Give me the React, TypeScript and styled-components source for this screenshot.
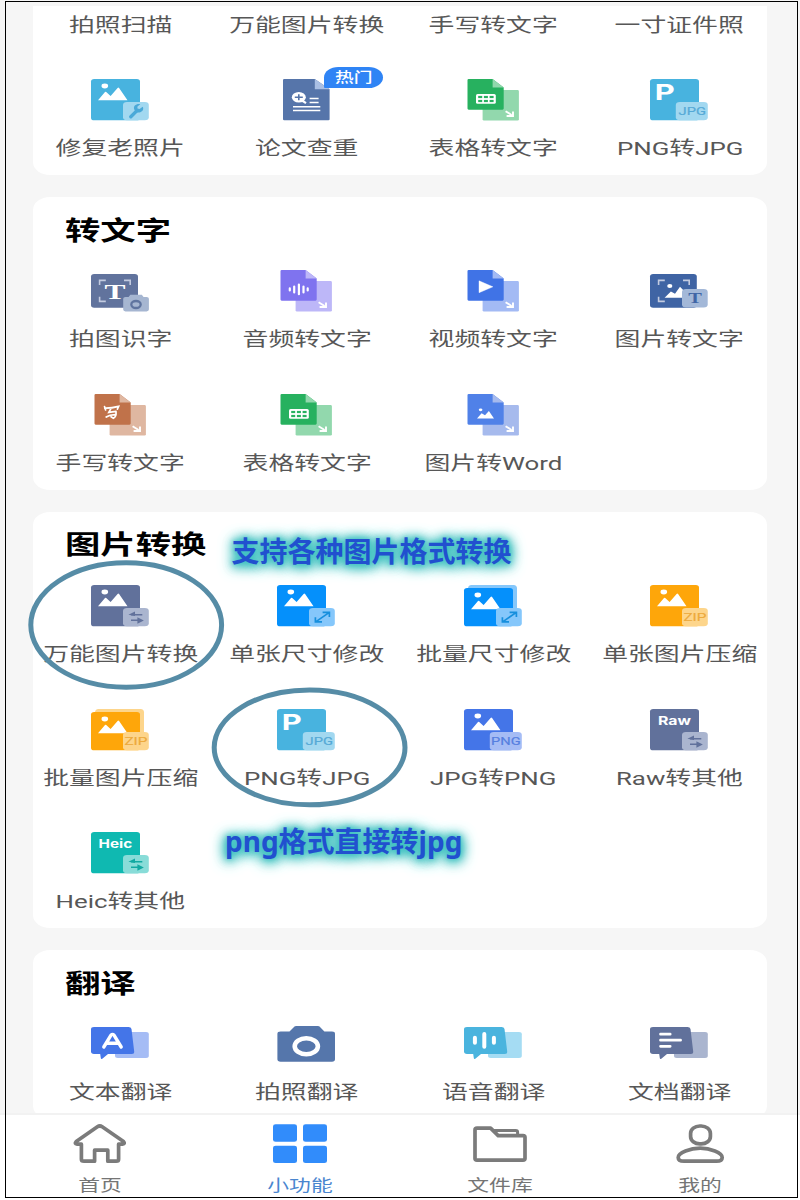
import React from "react";
import styled, { createGlobalStyle } from "styled-components";

const STRETCH = 1.36;
const CJK = `"Noto Sans CJK SC", sans-serif`;

const GlobalStyle = createGlobalStyle`
  * { box-sizing: border-box; }
  html, body { margin: 0; padding: 0; background: #f6f6f6; }
`;

const Screen = styled.div`
  position: relative;
  width: 800px;
  height: 1200px;
  overflow: hidden;
  display: flex;
  flex-direction: column;
  background: #f6f6f6;
  font-family: Roboto, ${CJK};
`;

const Feed = styled.main`
  flex: 1;
  min-height: 0;
  overflow: hidden;
  margin-top: 5.6px;
  padding: 0 33.3px;
  display: flex;
  flex-direction: column;
  gap: 22px;
`;

const Card = styled.section<{ $continued?: boolean }>`
  flex: none;
  background: #fff;
  border-radius: ${(p) => (p.$continued ? "0 0 17px 17px / 0 0 13px 13px" : "17px / 13px")};
  padding: ${(p) => (p.$continued ? "7px" : "0")} 0 13px;
`;

const Title = styled.h2`
  margin: 0 0 6px;
  height: 67px;
  padding-left: 31.7px;
  display: flex;
  align-items: center;
  font-size: 26px;
  line-height: 36px;
  font-weight: 700;
  color: #000;
`;

const TitleText = styled.span`
  display: inline-block;
  transform: scaleX(${STRETCH});
  transform-origin: left center;
`;

const Grid = styled.div`
  display: grid;
  grid-template-columns: repeat(4, 186.4px);
  row-gap: 40.7px;
  margin: 0 -6.4px;
`;

const Cell = styled.div`
  display: flex;
  flex-direction: column;
  align-items: center;
`;

const IconSlot = styled.div`
  position: relative;
  width: 60px;
  height: 44px;
  margin-bottom: 13px;
`;

const Drawing = styled.svg`
  display: block;
  width: 60px;
  height: 44px;
  overflow: visible;
`;

const Label = styled.span`
  height: 26px;
  line-height: 26px;
  padding-left: 0.6px;
  font-size: 19px;
  color: #575757;
  white-space: nowrap;
  transform: scaleX(${STRETCH});
`;

const HotBadge = styled.span`
  position: absolute;
  left: 47.6px;
  top: -12.6px;
  width: 59px;
  height: 21.4px;
  display: flex;
  align-items: center;
  justify-content: center;
  background: #2f84f5;
  border-radius: 15px 15px 15px 1px / 11px 11px 11px 1px;
`;

const HotText = styled.span`
  font-size: 13.8px;
  line-height: 20px;
  font-weight: 500;
  color: #fff;
  white-space: nowrap;
  transform: scaleX(${STRETCH});
`;

const TabBar = styled.nav`
  flex: none;
  height: 87px;
  border-top: 2px solid #f2f2f2;
  background: #fff;
  display: grid;
  grid-template-columns: repeat(4, 1fr);
`;

const Tab = styled.div<{ $active?: boolean }>`
  display: flex;
  flex-direction: column;
  align-items: center;
  padding-top: 7px;
  color: ${(p) => (p.$active ? "#4a86cf" : "#757575")};
`;

const TabLabel = styled.span`
  margin-top: 8px;
  font-size: 16px;
  line-height: 24px;
  white-space: nowrap;
  transform: scaleX(${STRETCH});
`;

const Frame = styled.div`
  position: absolute;
  left: 5px;
  top: 1px;
  width: 793px;
  height: 1197px;
  border: 1px solid #000;
  pointer-events: none;
`;

const Marks = styled.svg`
  position: absolute;
  inset: 0;
  width: 800px;
  height: 1200px;
  pointer-events: none;
`;

const Note = styled.div<{ $x: number; $y: number }>`
  position: absolute;
  left: ${(p) => p.$x}px;
  top: ${(p) => p.$y}px;
  font-family: "Noto Sans", ${CJK};
  font-size: 28px;
  line-height: 40px;
  font-weight: 700;
  color: #2150cf;
  white-space: nowrap;
  text-shadow: 0 0 5px #45c4c4, 0 1px 10px #35bcbc, 0 1px 13px #35bcbc, 0 1px 15px #4cc8c5, 0 2px 16px #5fcfcb;
`;

/* ---------- icon pieces ---------- */

type Tone = { c: string; l: string };

const Mountains = () => (
  <g fill="#fff">
    <ellipse cx="14.8" cy="7" rx="3.3" ry="2.4" />
    <path d="M8 21.2 15 13.1q.6-.7 1.2 0L20.6 17 27.6 9q.8-.8 1.5 0L37.5 21.2Z" />
  </g>
);

const Arrows = ({ c }: { c: string }) => (
  <g stroke={c} strokeWidth="1.5" fill={c}>
    <path d="M41 29.8H52.3M41 35.3H51" fill="none" />
    <path d="M38.4 29.8 45 26.6V31ZM53.9 35.5 47.4 32.2V38.7Z" stroke="none" />
  </g>
);

const Resize = ({ c }: { c: string }) => (
  <path d="M40 36.6 53 27.6M46.6 27.3H53.4V32M39.4 32.3V36.9H46" fill="none" stroke={c} strokeWidth="1.7" />
);

const Wrench = ({ c }: { c: string }) => (
  <g>
    <path d="M40.8 37.8 47 31.6" stroke={c} strokeWidth="3.4" strokeLinecap="round" />
    <path d="M52.7 27.7 49.6 30 47.4 29.4 47.5 27.4 50.3 25.2C46 24.5 43 27.2 44.2 30.2 45 33.2 48 34.3 50.3 33.2 52.8 32.2 54 29.9 52.7 27.7Z" fill={c} />
  </g>
);

const Tag = ({ text, c, x, w }: { text: string; c: string; x: number; w: number }) => (
  <text x={x} y="36.4" fontSize="11.4" fontFamily="Roboto, sans-serif" fontWeight="400" fill={c} stroke={c} strokeWidth=".2" textLength={w} lengthAdjust="spacingAndGlyphs">
    {text}
  </text>
);

const Head = ({ text, x, y, w, size }: { text: string; x: number; y: number; w: number; size: number }) => (
  <text x={x} y={y} fontSize={size} fontFamily="Inter, sans-serif" fontWeight="700" fill="#fff" textLength={w} lengthAdjust="spacingAndGlyphs">
    {text}
  </text>
);

type TileProps = {
  tone: Tone;
  wide?: boolean;
  stacked?: boolean;
  children?: React.ReactNode;
  badge: React.ReactNode;
};

const Tile = ({ tone, wide, stacked, children, badge }: TileProps) => (
  <Drawing viewBox="0 0 60 44">
    {stacked && <rect x="5" y="0" width="49" height="36" rx="3.5" fill={tone.l} />}
    <rect x="1" y={stacked ? 3 : 0} width="49" height={stacked ? 38.3 : 41.3} rx="3.2" ry="2.6" fill={tone.c} />
    {stacked ? <g transform="translate(0 3)">{children}</g> : children}
    <rect x={wide ? 26.8 : 33} y="23" width={wide ? 32 : 25.8} height="18.3" rx="4" ry="3" fill={tone.l} />
    {badge}
  </Drawing>
);

const Doc = ({ tone, children }: { tone: Tone; children: React.ReactNode }) => (
  <Drawing viewBox="0 0 60 44">
    <rect x="19.6" y="11" width="36.3" height="30.6" rx="1.4" fill={tone.l} />
    <path d="M5.7 0H29.6L40.7 8.6V29.6Q40.7 30.7 39.5 30.7H5.7Q4.5 30.7 4.5 29.6V1Q4.5 0 5.7 0Z" fill={tone.c} />
    <path d="M29.6 0 40.7 8.6H29.6Z" fill={tone.l} />
    {children}
    <path d="M42.6 32.2 48.6 36M50 32.5V37H43.6" fill="none" stroke="#fff" strokeWidth="1.9" />
  </Drawing>
);

const SheetGlyph = ({ c }: { c: string }) => (
  <g>
    <rect x="13" y="15" width="19.8" height="9.8" rx="1.6" fill="#fff" />
    {[15.2, 20.9, 26.6].map((x) =>
      [16.9, 20.9].map((y) => <rect key={`${x}-${y}`} x={x} y={y} width="4" height="2.2" fill={c} />)
    )}
  </g>
);

const Corners = () => (
  <path d="M9.6 15V10.4H15.8M34 10.4H40.2V15M9.6 26.8V31.4H15.8" fill="none" stroke="#c3cbe0" strokeWidth="1.6" />
);

const SerifT = ({ x, y, w, size, c }: { x: number; y: number; w: number; size: number; c: string }) => (
  <text x={x} y={y} fontSize={size} fontFamily='"Liberation Serif", serif' fontWeight="700" fill={c} textLength={w} lengthAdjust="spacingAndGlyphs">
    T
  </text>
);

const Bubble = ({ tone, children }: { tone: Tone; children: React.ReactNode }) => (
  <Drawing viewBox="0 0 60 44">
    <rect x="25" y="9" width="33.8" height="26" rx="2.8" ry="2.2" fill={tone.l} />
    <path d="M4 4H38.5Q41 4 41.5 6L44.2 28.5Q44.4 31 41.8 31H18L12.3 35.7Q11 36.5 10.8 35L10.2 31H4Q1 31 1 28.6V6.4Q1 4 4 4Z" fill={tone.c} />
    {children}
  </Drawing>
);

/* ---------- icon set ---------- */

const sky: Tone = { c: "#48b3df", l: "#a2d8f0" };
const slate: Tone = { c: "#61719b", l: "#aab5cf" };
const azure: Tone = { c: "#0590fb", l: "#85c7fb" };
const amber: Tone = { c: "#fea60a", l: "#fdd58b" };
const green: Tone = { c: "#27b15f", l: "#92d8ad" };
const royal: Tone = { c: "#4475e8", l: "#a5bcf5" };

const icons: Record<string, React.ReactNode> = {
  repair: <Tile tone={sky} badge={<Wrench c="#4aa9d8" />}><Mountains /></Tile>,
  paper: (
    <Drawing viewBox="0 0 60 44">
      <path d="M8.2 0H38.8L53.6 10.3V40.2Q53.6 41.3 52.4 41.3H8.2Q7 41.3 7 40.2V1.1Q7 0 8.2 0Z" fill="#5675aa" />
      <path d="M38.8 0 53.6 10.3H38.8Z" fill="#a9bfe4" />
      <path d="M26 21.5 30 24.2" stroke="#fff" strokeWidth="2.2" />
      <ellipse cx="22.8" cy="18.3" rx="7" ry="5.3" fill="#fff" />
      <path d="M18.8 18.3H26.8M22.8 15.3V21.3" stroke="#5675aa" strokeWidth="1.6" />
      <path d="M33.6 19.6H42.6M33.6 23.6H42.6M17 27.8H44.3M17 31.6H44.3" stroke="#fff" strokeWidth="1.5" />
    </Drawing>
  ),
  sheet: <Doc tone={green}><SheetGlyph c="#27b15f" /></Doc>,
  toJpg: (
    <Tile tone={sky} wide badge={<Tag text="JPG" c="#55a9d6" x={29.6} w={27.4} />}>
      <Head text="P" x={5.8} y={21} w={20} size={21.5} />
    </Tile>
  ),
  scanText: (
    <Drawing viewBox="0 0 60 44">
      <rect x="1" y="4" width="47" height="33.7" rx="3.2" ry="2.6" fill="#61739d" />
      <Corners />
      <SerifT x={14.6} y={29} w={21} size={22} c="#fff" />
      <path d="M35.5 27H38.6L40.3 24.7H51.8L53.6 27H56.6Q58.9 27 58.9 28.8V39.6Q58.9 41.4 56.6 41.4H35.5Q33.2 41.4 33.2 39.6V28.8Q33.2 27 35.5 27Z" fill="#a6b6d1" />
      <ellipse cx="46" cy="34.5" rx="4.7" ry="3.5" fill="none" stroke="#5f749f" strokeWidth="2.3" />
    </Drawing>
  ),
  audio: (
    <Doc tone={{ c: "#7f73ef", l: "#bdb7f8" }}>
      <path d="M13.8 18.4V20.4M18.2 16.6V22.4M22.9 14.6V24.2M27.5 16.6V22.4M31.7 18.4V20.4" stroke="#fff" strokeWidth="2.2" strokeLinecap="round" />
    </Doc>
  ),
  video: (
    <Doc tone={{ c: "#4073e6", l: "#a3baf4" }}>
      <path d="M16 10.8 29.9 16.8 16 22.7Z" fill="#fff" stroke="#fff" strokeWidth=".4" strokeLinejoin="round" />
    </Doc>
  ),
  imageText: (
    <Drawing viewBox="0 0 60 44">
      <rect x="1" y="4" width="46.8" height="33.7" rx="3.2" ry="2.6" fill="#3f64a4" />
      <Corners />
      <ellipse cx="20.8" cy="16" rx="2.6" ry="1.9" fill="#fff" />
      <path d="M15.6 27.8 21.9 21.4 26 23.8 31 16.8 38 24V27.8Z" fill="#fff" />
      <rect x="33" y="19" width="25.7" height="18.4" rx="4" ry="3" fill="#a3b8d8" />
      <SerifT x={39.2} y={32.7} w={13.6} size={14} c="#4066a6" />
    </Drawing>
  ),
  hand: (
    <Doc tone={{ c: "#c0724a", l: "#dfb7a1" }}>
      <path d="M14.5 12.6 15.6 16M14.8 14.2Q21 14.4 28.6 12.4L27.4 15.2M21.2 14.2 18.8 18.4 26 17.4M26 17.8Q26.6 22.6 23.4 24.2L21 22.8M16.2 23Q20 20.4 26 20.6" fill="none" stroke="#fff" strokeWidth="1.7" strokeLinecap="round" />
    </Doc>
  ),
  word: (
    <Doc tone={{ c: "#5081e8", l: "#a6baed" }}>
      <ellipse cx="17.6" cy="15.8" rx="1.8" ry="1.4" fill="#fff" />
      <path d="M14 24.4 18.6 19.2 22 21.2 25.9 17 31 24.4Z" fill="#fff" />
    </Doc>
  ),
  convert: <Tile tone={slate} badge={<Arrows c="#61719b" />}><Mountains /></Tile>,
  size: <Tile tone={azure} badge={<Resize c="#168fdd" />}><Mountains /></Tile>,
  sizeBatch: <Tile tone={azure} stacked badge={<Resize c="#168fdd" />}><Mountains /></Tile>,
  zip: <Tile tone={amber} badge={<Tag text="ZIP" c="#edaa3c" x={34.4} w={23} />}><Mountains /></Tile>,
  zipBatch: <Tile tone={amber} stacked badge={<Tag text="ZIP" c="#edaa3c" x={34.4} w={23} />}><Mountains /></Tile>,
  toPng: <Tile tone={royal} wide badge={<Tag text="PNG" c="#557fe0" x={28} w={29.6} />}><Mountains /></Tile>,
  raw: (
    <Tile tone={slate} badge={<Arrows c="#61719b" />}>
      <Head text="Raw" x={9} y={15.7} w={33} size={12} />
    </Tile>
  ),
  heic: (
    <Tile tone={{ c: "#0fb9b1", l: "#88dcd8" }} badge={<Arrows c="#12a9a2" />}>
      <Head text="Heic" x={8.6} y={15.7} w={33.6} size={12} />
    </Tile>
  ),
  textTrans: (
    <Bubble tone={royal}>
      <path d="M13.8 24 21 12.2Q22.5 10.6 24 12.2L31.2 24M17.5 20.3H27.5" fill="none" stroke="#fff" strokeWidth="3.4" strokeLinecap="round" strokeLinejoin="round" />
    </Bubble>
  ),
  camera: (
    <Drawing viewBox="0 0 60 44">
      <path d="M4.6 8.4H13.5L17.5 4.4Q18.6 3 20.6 3H41.5Q43.4 3 44.5 4.4L48.4 8.4H56Q59 8.4 59 10.8V36.3Q59 38.7 56 38.7H4.6Q1.4 38.7 1.4 36.3V10.8Q1.4 8.4 4.6 8.4Z" fill="#5576ab" />
      <ellipse cx="30.3" cy="23.2" rx="11.6" ry="8" fill="none" stroke="#fff" strokeWidth="4.6" />
    </Drawing>
  ),
  voice: (
    <Bubble tone={{ c: "#4ab4de", l: "#a5dcf3" }}>
      <path d="M11.9 14.8V19.8M21.3 11V23.8M30.9 14.8V19.8" stroke="#fff" strokeWidth="4" strokeLinecap="round" />
    </Bubble>
  ),
  docTrans: (
    <Bubble tone={slate}>
      <path d="M11.5 11.2H21.2M11.5 17.2H31.6M11.5 23.3H21.2" stroke="#fff" strokeWidth="2.7" strokeLinecap="round" />
    </Bubble>
  ),
};

type Item = { label: string; icon?: string; hot?: boolean };

const Tools = ({ items }: { items: Item[] }) => (
  <Grid>
    {items.map((it, i) => (
      <Cell key={i}>
        {it.icon && (
          <IconSlot>
            {icons[it.icon]}
            {it.hot && (
              <HotBadge>
                <HotText>热门</HotText>
              </HotBadge>
            )}
          </IconSlot>
        )}
        <Label>{it.label}</Label>
      </Cell>
    ))}
  </Grid>
);

const recent: Item[] = [
  { label: "拍照扫描" },
  { label: "万能图片转换" },
  { label: "手写转文字" },
  { label: "一寸证件照" },
  { label: "修复老照片", icon: "repair" },
  { label: "论文查重", icon: "paper", hot: true },
  { label: "表格转文字", icon: "sheet" },
  { label: "PNG转JPG", icon: "toJpg" },
];

const sections: { title: string; items: Item[] }[] = [
  {
    title: "转文字",
    items: [
      { label: "拍图识字", icon: "scanText" },
      { label: "音频转文字", icon: "audio" },
      { label: "视频转文字", icon: "video" },
      { label: "图片转文字", icon: "imageText" },
      { label: "手写转文字", icon: "hand" },
      { label: "表格转文字", icon: "sheet" },
      { label: "图片转Word", icon: "word" },
    ],
  },
  {
    title: "图片转换",
    items: [
      { label: "万能图片转换", icon: "convert" },
      { label: "单张尺寸修改", icon: "size" },
      { label: "批量尺寸修改", icon: "sizeBatch" },
      { label: "单张图片压缩", icon: "zip" },
      { label: "批量图片压缩", icon: "zipBatch" },
      { label: "PNG转JPG", icon: "toJpg" },
      { label: "JPG转PNG", icon: "toPng" },
      { label: "Raw转其他", icon: "raw" },
      { label: "Heic转其他", icon: "heic" },
    ],
  },
  {
    title: "翻译",
    items: [
      { label: "文本翻译", icon: "textTrans" },
      { label: "拍照翻译", icon: "camera" },
      { label: "语音翻译", icon: "voice" },
      { label: "文档翻译", icon: "docTrans" },
    ],
  },
];

const line = { fill: "none", stroke: "#7b7b7b", strokeWidth: 3.7, strokeLinejoin: "round" as const };

const tabs = [
  {
    label: "首页",
    icon: (
      <path {...line} d="M27.4 4.8Q29.8 3.2 32.2 4.8L53.5 19.6Q55.6 21.8 52.4 22.2H48.6V37.2Q48.6 39.2 46.2 39.2H37.8V28.2H24.6V39.2H14Q11.4 39.2 11.4 37.2V22.2H7.2Q4 21.8 6.2 19.6Z" />
    ),
  },
  {
    label: "小功能",
    active: true,
    icon: (
      <g fill="#318cfb">
        {[3, 33].map((x) => [2.3, 23.7].map((y) => <rect key={`${x}-${y}`} x={x} y={y} width="24" height="17.4" rx="2.6" ry="2" />))}
      </g>
    ),
  },
  {
    label: "文件库",
    icon: (
      <g {...line}>
        <path d="M5 36.6V8Q5 6.2 7 6.2H20.6L28.2 13.6H53Q55 13.6 55 15.3V36.6Q55 38.2 53 38.2H7Q5 38.2 5 36.6Z" />
        <path d="M24 8.6H45.6Q47.6 8.6 47.6 10.3V13" strokeWidth="3" />
      </g>
    ),
  },
  {
    label: "我的",
    icon: (
      <g {...line}>
        <rect x="20.6" y="4" width="19.8" height="17.9" rx="9.2" ry="7.4" />
        <path d="M30.2 26.2C40 26.2 52.2 30.4 52.2 35.4 52.2 38 49.8 39.2 46.5 39.2H14C10.4 39.2 8.2 38 8.2 35.4 8.2 30.4 20.4 26.2 30.2 26.2Z" />
      </g>
    ),
  },
];

export default function App() {
  return (
    <Screen>
      <GlobalStyle />
      <Feed>
        <Card $continued>
          <Tools items={recent} />
        </Card>
        {sections.map((s) => (
          <Card key={s.title}>
            <Title>
              <TitleText>{s.title}</TitleText>
            </Title>
            <Tools items={s.items} />
          </Card>
        ))}
      </Feed>
      <TabBar>
        {tabs.map((t) => (
          <Tab key={t.label} $active={t.active}>
            <Drawing viewBox="0 0 60 44">{t.icon}</Drawing>
            <TabLabel>{t.label}</TabLabel>
          </Tab>
        ))}
      </TabBar>
      <Marks viewBox="0 0 800 1200" fill="none" stroke="#568ca6" strokeWidth="5">
        <ellipse cx="126.2" cy="625" rx="95.4" ry="62.2" />
        <ellipse cx="309.6" cy="747.4" rx="95.4" ry="57.4" />
      </Marks>
      <Note $x={231.5} $y={531}>支持各种图片格式转换</Note>
      <Note $x={225} $y={821}>png格式直接转jpg</Note>
      <Frame />
    </Screen>
  );
}
